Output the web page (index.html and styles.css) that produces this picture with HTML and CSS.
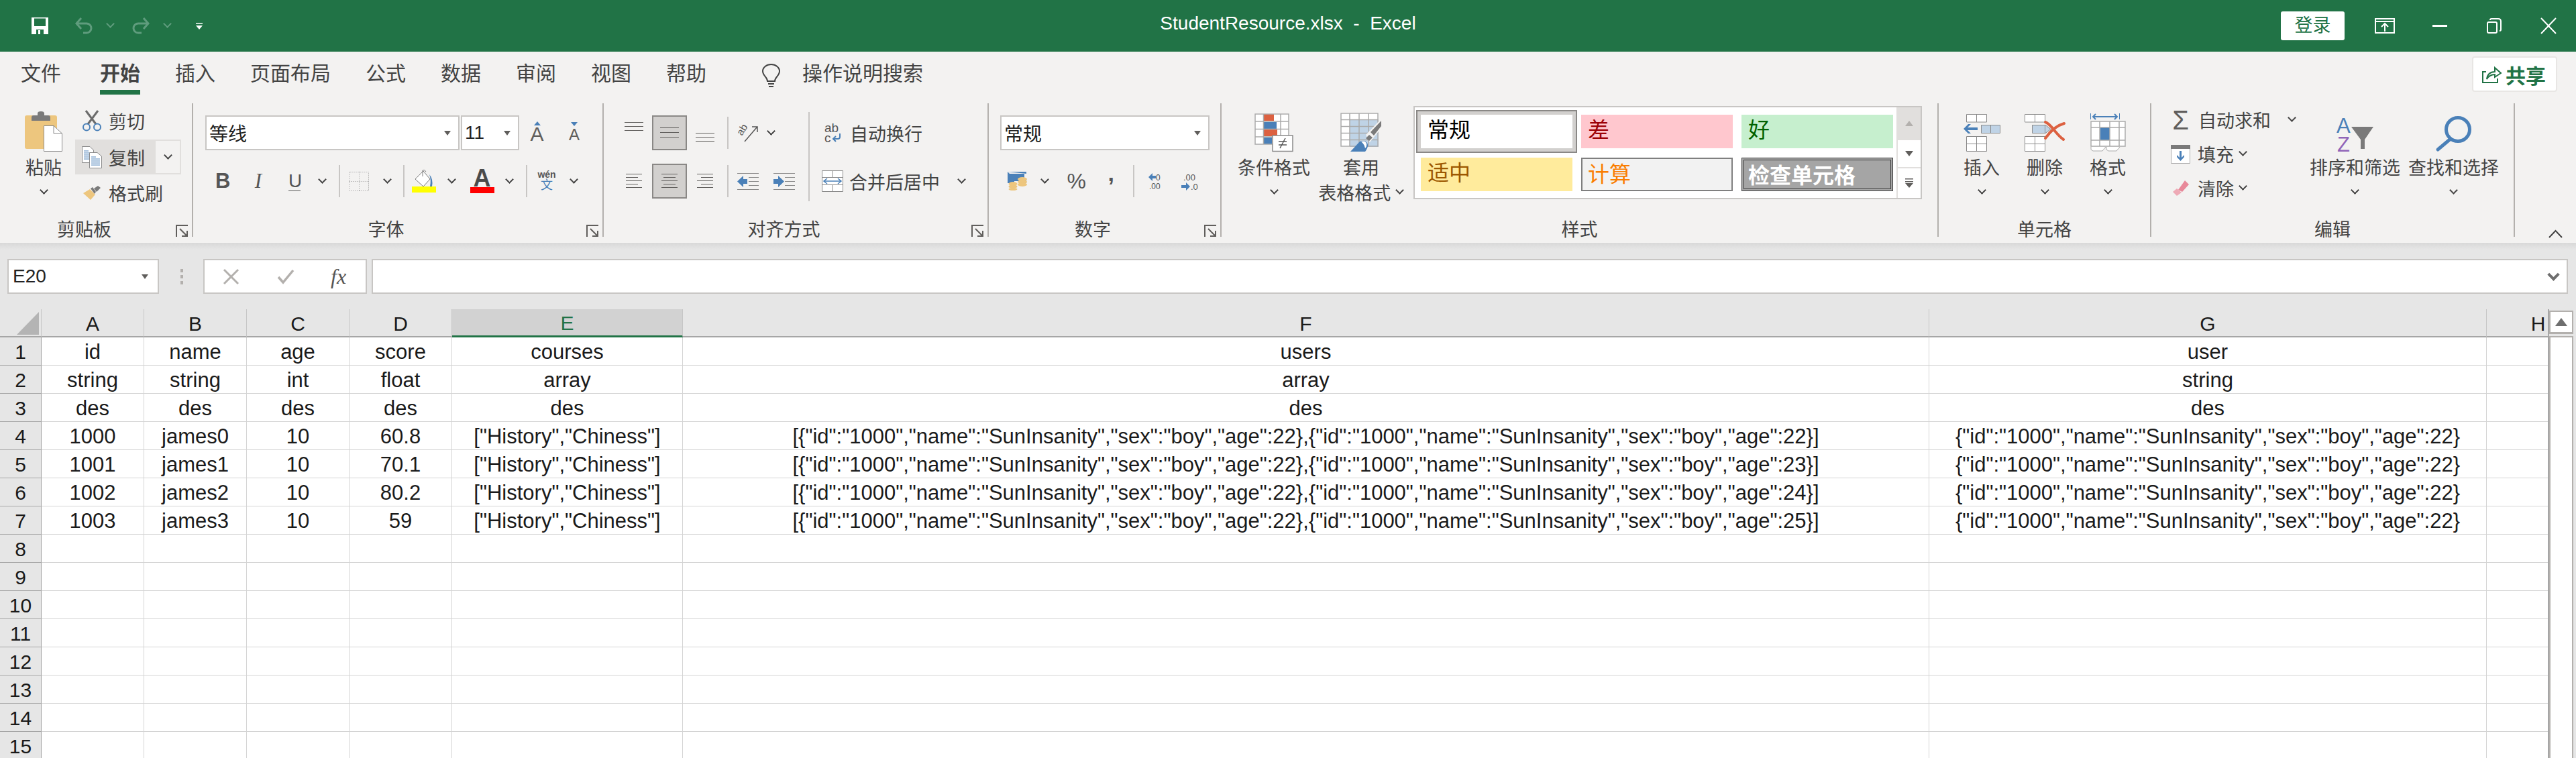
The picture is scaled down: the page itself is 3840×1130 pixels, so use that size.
FILE: index.html
```html
<!doctype html>
<html>
<head>
  <title>StudentResource.xlsx - Excel</title>
  <link rel="stylesheet" href="styles.css">
</head>
<body>
  <div id="titleBar">
    <div class="quick">
      <svg class="ml-18" width="25" height="25" viewBox="0 0 25 25"><path fill="#fff" d="M0 0H25V25H0Z"/><path fill="#217346" d="M4 1.5H21V13H4ZM7 18H18V25H7Z"/><path fill="#fff" d="M10 19H13V25H10Z"/></svg>
      <svg class="ml-40" width="26" height="27" viewBox="0 0 26 27"><path fill="none" stroke="#5f9c7d" stroke-width="3" d="M2 10H17A7 7 0 0 1 17 24H12M9 2L2 10L9 18"/></svg>
      <i class="chev chev-fade ml-22"></i>
      <svg class="ml-26" width="26" height="27" viewBox="0 0 26 27"><path fill="none" stroke="#5f9c7d" stroke-width="3" d="M24 10H9A7 7 0 0 0 9 24H14M17 2L24 10L17 18"/></svg>
      <i class="chev chev-fade ml-22"></i>
      <svg class="ml-37" width="10" height="10" viewBox="0 0 10 10"><path fill="#fff" d="M0 0H10V1.5H0ZM0 4H10L5 10Z"/></svg>
    </div>
    <div class="title">StudentResource.xlsx&nbsp; - &nbsp;Excel</div>
    <div class="win">
      <div class="login">登录</div>
      <svg class="ml-45" width="30" height="23" viewBox="0 0 30 23"><path fill="none" stroke="#fff" stroke-width="2" d="M1 1H29V22H1ZM1 5H29M15 20V9M10 13L15 8L20 13"/></svg>
      <svg class="ml-56" width="22" height="3" viewBox="0 0 22 3"><path fill="#fff" d="M0 0H22V3H0Z"/></svg>
      <svg class="ml-59" width="22" height="23" viewBox="0 0 22 23"><path fill="none" stroke="#fff" stroke-width="2" d="M5 3Q5 1 7 1H17Q21 1 21 5V17Q21 19 19 19M3 6H13Q15 6 15 8V20Q15 22 13 22H3Q1 22 1 20V8Q1 6 3 6Z"/></svg>
      <svg class="ml-58" width="24" height="23" viewBox="0 0 24 23"><path fill="none" stroke="#fff" stroke-width="2" d="M1 0L23 23M23 0L1 23"/></svg>
    </div>
  </div>

  <div id="tabBar">
    <div class="tab tab-file">文件</div>
    <div class="tab tab-on">开始</div>
    <div class="tab">插入</div>
    <div class="tab">页面布局</div>
    <div class="tab">公式</div>
    <div class="tab">数据</div>
    <div class="tab">审阅</div>
    <div class="tab">视图</div>
    <div class="tab">帮助</div>
    <svg class="bulb" width="27" height="36" viewBox="0 0 27 36"><path fill="none" stroke="#444" stroke-width="2" d="M8 26C8 20 1 18 1 11A12.500 10 0 0 1 26 11C26 18 19 20 19 26ZM9 30H18M10 34H17"/></svg>
    <div class="tab search">操作说明搜索</div>
    <div class="share">
      <svg width="29" height="26" viewBox="0 0 29 26"><path fill="none" stroke="#217346" stroke-width="2" d="M6 9H1V25H23V19"/><path fill="none" stroke="#217346" stroke-width="2" d="M7 20C8 12 12 9 19 9V3L28 11L19 17V13C14 13 10 15 7 20Z"/></svg>
      <span>共享</span>
    </div>
  </div>

  <div id="ribbon">
    <!-- clipboard -->
    <div class="group g-clip">
      <div class="group-body">
        <div class="big-btn paste-btn">
          <div class="big-icon">
            <svg width="56" height="60" viewBox="0 0 56 60"><rect y="6" width="48" height="50" rx="3" fill="#edc67e"/><path fill="#7a7a7a" d="M10 14V9Q10 6 13 6H19V3Q19 0 24 0Q29 0 29 3V6H35Q38 6 38 9V14Z"/><path fill="#fff" stroke="#8a8a8a" d="M28.500 21.500H43L55.500 33V59.500H28.500Z"/><path fill="none" stroke="#8a8a8a" d="M43 21.500V33H55.500"/></svg>
          </div>
          <div class="big-label">粘贴</div>
          <div class="big-chev"><i class="chev"></i></div>
        </div>
        <div class="clip-col">
          <div class="clip-row clip-cut">
            <div class="clip-ic"><svg width="30" height="32" viewBox="0 0 30 32"><path fill="none" stroke="#6b6b6b" stroke-width="3" d="M9 21L24 1M21 21L6 1"/><circle cx="7" cy="25.500" r="5" fill="none" stroke="#4a80b8" stroke-width="2"/><circle cx="23" cy="25.500" r="5" fill="none" stroke="#4a80b8" stroke-width="2"/></svg></div>
            <span>剪切</span>
          </div>
          <div class="clip-row clip-copy">
            <div class="clip-ic"><svg width="30" height="33" viewBox="0 0 30 33"><path fill="#fff" stroke="#8a8a8a" d="M.5 .5H12L17.500 6V24.500H.5Z"/><path fill="none" stroke="#4a80b8" d="M3 7H10M3 10H15M3 13H15M3 16H15M3 19H15"/><path fill="#fff" stroke="#8a8a8a" d="M11.500 9.500H23L29.500 15V32.500H11.500Z"/><path fill="none" stroke="#4a80b8" d="M14 16H21M14 19H27M14 22H27M14 25H27M14 28H27"/></svg></div>
            <span>复制</span>
            <div class="copy-drop"><i class="chev"></i></div>
          </div>
          <div class="clip-row">
            <div class="clip-ic"><svg width="26" height="21" viewBox="0 0 26 21"><path fill="#edc67e" d="M0 11L10 5L18 13L11 21Z"/><path fill="#7a7a7a" d="M11 4L14 2L19 9L17 12ZM16 4L22 0L26 3L20 9Z"/></svg></div>
            <span>格式刷</span>
          </div>
        </div>
      </div>
      <div class="group-foot">
        <div class="foot-label">剪贴板</div>
        <div class="launcher"><svg width="18" height="18" viewBox="0 0 18 18"><path fill="none" stroke="#605e5c" stroke-width="2" d="M1 18V1H18M6 6L17 17M17 9V17H9"/></svg></div>
      </div>
    </div>

    <!-- font -->
    <div class="group g-font">
      <div class="group-body two-rows">
        <div class="row">
          <div class="select font-name"><span>等线</span><i class="tri"></i></div>
          <div class="select font-size"><span>11</span><i class="tri"></i></div>
          <div class="grow-a ml-19">A<svg width="10" height="6" viewBox="0 0 10 6"><path fill="#4a80b8" d="M5 0L10 6H0Z"/></svg></div>
          <div class="shrink-a ml-42">A<svg width="10" height="6" viewBox="0 0 10 6"><path fill="#4a80b8" d="M5 6L10 0H0Z"/></svg></div>
        </div>
        <div class="row">
          <span class="fmt-b ml-15">B</span>
          <span class="fmt-i ml-37">I</span>
          <span class="fmt-u ml-37">U</span>
          <i class="chev ml-28"></i>
          <i class="vsep ml-18"></i>
          <svg class="ml-14" width="29" height="29" viewBox="0 0 29 29"><path fill="none" stroke="#8a8a8a" stroke-dasharray="1 2" d="M.5 .5H28.500V28.500H.5ZM14.500 0V29M0 14.500H29"/></svg>
          <i class="chev ml-23"></i>
          <i class="vsep ml-18"></i>
          <svg class="ml-11" width="36" height="34" viewBox="0 0 36 34"><path fill="#fff" stroke="#7a7a7a" d="M5 14L17 2L27 14L17 25Z"/><path fill="none" stroke="#7a7a7a" d="M16 10V1Q19 -1 21 3"/><path fill="#4a80b8" d="M26 7Q32 14 30 25H27Q29 15 26 7Z"/><path fill="#ff0" d="M0 25H36V34H0Z"/></svg>
          <i class="chev ml-19"></i>
          <div class="font-color ml-21"><span>A</span><i></i></div>
          <i class="chev ml-18"></i>
          <i class="vsep ml-19"></i>
          <div class="phonetic ml-16"><span>wén</span><b>文</b></div>
          <i class="chev ml-23"></i>
        </div>
      </div>
      <div class="group-foot">
        <div class="foot-label">字体</div>
        <div class="launcher"><svg width="18" height="18" viewBox="0 0 18 18"><path fill="none" stroke="#605e5c" stroke-width="2" d="M1 18V1H18M6 6L17 17M17 9V17H9"/></svg></div>
      </div>
    </div>

    <!-- alignment -->
    <div class="group g-align">
      <div class="group-body align-body">
        <div class="align-grid">
          <div class="al-cell"><svg width="28" height="52" viewBox="0 0 28 52"><path stroke="#605e5c" d="M0 10.500H28M0 16.500H28M0 22.500H28"/></svg></div>
          <div class="al-cell al-on"><svg width="28" height="48" viewBox="0 0 28 48"><path stroke="#605e5c" d="M0 16.500H28M0 23.500H28M0 30.500H28"/></svg></div>
          <div class="al-cell"><svg width="28" height="52" viewBox="0 0 28 52"><path stroke="#605e5c" d="M0 26.500H28M0 32.500H28M0 38.500H28"/></svg></div>
          <div class="al-cell"><svg width="24" height="52" viewBox="0 0 24 52"><path stroke="#605e5c" d="M0 15.500H24M0 20.500H18M0 25.500H24M0 30.500H18M0 35.500H24"/></svg></div>
          <div class="al-cell al-on"><svg width="24" height="48" viewBox="0 0 24 48"><path stroke="#605e5c" d="M0 13.500H24M3 18.500H21M0 23.500H24M3 28.500H21M0 33.500H24"/></svg></div>
          <div class="al-cell"><svg width="24" height="52" viewBox="0 0 24 52"><path stroke="#605e5c" d="M0 15.500H24M6 20.500H24M0 25.500H24M6 30.500H24M0 35.500H24"/></svg></div>
        </div>
        <div class="vsep-pair ml-6"><i class="vsep"></i><i class="vsep"></i></div>
        <div class="align-mid">
          <div class="row">
            <svg class="ml-15" width="29" height="25" viewBox="0 0 29 25"><text class="svg-txt" font-size="15" transform="translate(5 17) rotate(-58)" fill="#555">ab</text><path fill="none" stroke="#555" stroke-width="1.500" d="M9 25L27 4M20 3H28V11"/></svg>
            <i class="chev ml-15"></i>
          </div>
          <div class="row">
            <svg class="ml-13" width="32" height="25" viewBox="0 0 32 25"><path stroke="#8a8a8a" d="M0 .5H32M17 6.500H32M17 12.500H32M17 18.500H32M0 24.500H32"/><path fill="#4a80b8" d="M0 12.500L9 4V9H15V16H9V21Z"/></svg>
            <svg class="ml-22" width="32" height="25" viewBox="0 0 32 25"><path stroke="#8a8a8a" d="M0 .5H32M17 6.500H32M17 12.500H32M17 18.500H32M0 24.500H32"/><path fill="#4a80b8" d="M16 12.500L7 4V9H0V16H7V21Z"/></svg>
          </div>
        </div>
        <i class="vsep vsep-tall"></i>
        <div class="align-wrap">
          <div class="row">
            <svg class="ml-22" width="25" height="28" viewBox="0 0 25 28"><text class="svg-txt" x="0" y="13" font-size="19" fill="#555">ab</text><text class="svg-txt" x="0" y="28" font-size="19" fill="#555">c</text><path fill="none" stroke="#4a80b8" stroke-width="2" d="M23 15V20Q23 23 20 23H13M17 19L13 23L17 27"/></svg>
            <span class="ml-13">自动换行</span>
          </div>
          <div class="row">
            <svg class="ml-18" width="32" height="32" viewBox="0 0 32 32"><path fill="#fff" stroke="#8a8a8a" d="M.5 .5H31.500V31.500H.5ZM0 10.500H32M0 21.500H32M16 0V10M16 22V32"/><path fill="none" stroke="#4a80b8" stroke-width="1.500" d="M4 16H28M8 12L3 16L8 20M24 12L29 16L24 20"/></svg>
            <span class="ml-9">合并后居中</span>
            <i class="chev ml-28"></i>
          </div>
        </div>
      </div>
      <div class="group-foot">
        <div class="foot-label">对齐方式</div>
        <div class="launcher"><svg width="18" height="18" viewBox="0 0 18 18"><path fill="none" stroke="#605e5c" stroke-width="2" d="M1 18V1H18M6 6L17 17M17 9V17H9"/></svg></div>
      </div>
    </div>

    <!-- number -->
    <div class="group g-num">
      <div class="group-body two-rows">
        <div class="row">
          <div class="select num-fmt"><span>常规</span><i class="tri"></i></div>
        </div>
        <div class="row">
          <svg class="ml-11" width="29" height="28" viewBox="0 0 29 28"><path fill="#4a80b8" d="M0 0H28V17H20V14H3V3H25V10H28V3ZM0 0V17H10V14H3V3Z"/><ellipse cx="14" cy="8.500" rx="3.500" ry="5" fill="#4a80b8"/><g fill="#edc67e"><ellipse cx="22" cy="11" rx="7" ry="3"/><ellipse cx="22" cy="15" rx="7" ry="3"/><ellipse cx="22" cy="19" rx="7" ry="3"/><ellipse cx="8" cy="18" rx="6.500" ry="3"/><ellipse cx="8" cy="22" rx="6.500" ry="3"/><ellipse cx="8" cy="26" rx="6.500" ry="2"/></g></svg>
          <i class="chev ml-22"></i>
          <span class="pct ml-27">%</span>
          <span class="comma ml-34">,</span>
          <i class="vsep ml-28"></i>
          <svg class="ml-21" width="21" height="24" viewBox="0 0 21 24"><path fill="#4a80b8" d="M0 6L6 0V4H11V8H6V12Z"/><text class="svg-txt" x="11" y="11" font-size="12" fill="#555">0</text><text class="svg-txt" x="1" y="24" font-size="12" fill="#555">.00</text></svg>
          <svg class="ml-28" width="26" height="27" viewBox="0 0 26 27"><text class="svg-txt" x="3" y="12" font-size="13" fill="#555">.00</text><path fill="#4a80b8" d="M13 21L7 15V19H0V23H7V27Z"/><text class="svg-txt" x="14" y="26" font-size="13" fill="#555">.0</text></svg>
        </div>
      </div>
      <div class="group-foot">
        <div class="foot-label">数字</div>
        <div class="launcher"><svg width="18" height="18" viewBox="0 0 18 18"><path fill="none" stroke="#605e5c" stroke-width="2" d="M1 18V1H18M6 6L17 17M17 9V17H9"/></svg></div>
      </div>
    </div>

    <!-- styles -->
    <div class="group g-style">
      <div class="group-body">
        <div class="big-btn cond-btn">
          <div class="big-icon">
            <svg width="58" height="57" viewBox="0 0 58 57"><path fill="#fff" d="M0 0H51V46H0Z"/><path fill="#dc6141" d="M14 1H29V11H14ZM14 24H34V34H14Z"/><path fill="#4a80b8" d="M14 13H33V23H14ZM14 36H26V46H14Z"/><path fill="none" stroke="#aaa" stroke-width="1.500" d="M1 1H51V46H1ZM13.500 1V46M39 1V46M1 12H51M1 23.500H51M1 35H51"/><path fill="#fff" stroke="#8a8a8a" stroke-width="1.500" d="M27 33H57V56.500H27Z"/><path fill="none" stroke="#555" stroke-width="1.500" d="M36 42H48M36 47H48M46 37L38 52"/></svg>
          </div>
          <div class="big-label">条件格式</div>
          <div class="big-chev"><i class="chev"></i></div>
        </div>
        <div class="big-btn table-btn">
          <div class="big-icon">
            <svg width="62" height="58" viewBox="0 0 62 58"><path fill="#fff" d="M0 0H57V51H0Z"/><path fill="#bfd3e6" d="M14 10H57V51H14Z"/><path fill="none" stroke="#aaa" stroke-width="1.500" d="M1 1H56V50H1ZM14 1V50M28 1V50M42 1V50M1 10.500H56M1 20.500H56M1 30.500H56M1 40.500H56"/><path fill="#f3f2f1" d="M38 33L62 8V22L44 44Z"/><path fill="#7a7a7a" d="M45 29L61 12V20L50 34ZM38 38L43 33L48 37L43 42Z"/><path fill="#4a80b8" d="M15 58L29 43Q36 40 40 45Q43 50 37 58Z"/><path fill="#fff" d="M31 43Q37 41 39 46Q40 50 37 53Q36 47 31 43Z"/></svg>
          </div>
          <div class="big-label">套用</div>
          <div class="big-second">表格格式<i class="chev ml-9"></i></div>
        </div>
        <div class="gallery">
          <div class="cell-styles">
            <div class="cs cs-normal">常规</div>
            <div class="cs cs-bad">差</div>
            <div class="cs cs-good">好</div>
            <div class="cs cs-neutral">适中</div>
            <div class="cs cs-calc">计算</div>
            <div class="cs cs-check">检查单元格</div>
          </div>
          <div class="gal-scroll">
            <div class="gs gs-up"><svg width="12" height="8" viewBox="0 0 12 8"><path fill="#b3b0ad" d="M6 0L12 8H0Z"/></svg></div>
            <div class="gs gs-down"><svg width="12" height="8" viewBox="0 0 12 8"><path fill="#605e5c" d="M6 8L12 0H0Z"/></svg></div>
            <div class="gs gs-more"><svg width="12" height="14" viewBox="0 0 12 14"><path fill="#605e5c" d="M0 0H12V1.500H0ZM0 4H12V5.500H0ZM6 14L12 7H0Z"/></svg></div>
          </div>
        </div>
      </div>
      <div class="group-foot">
        <div class="foot-label">样式</div>
      </div>
    </div>

    <!-- cells -->
    <div class="group g-cells">
      <div class="group-body">
        <div class="big-btn cell-btn">
          <div class="big-icon">
            <svg width="55" height="56" viewBox="0 0 55 56"><path fill="#fff" stroke="#8a8a8a" d="M4.500 .5H34.500V12H4.500ZM19.500 0V12M4.500 33.500H34.500V55.500H4.500ZM19.500 33V56M4 44.500H35"/><path fill="#bfd3e6" stroke="#8a8a8a" d="M26.500 16.500H54.500V28.500H26.500ZM40.500 16V29"/><path fill="#4a80b8" d="M0 22L7 15H11L6 20H21V24H6L11 29H7Z"/></svg>
          </div>
          <div class="big-label">插入</div>
          <div class="big-chev"><i class="chev"></i></div>
        </div>
        <div class="big-btn cell-btn ml-40">
          <div class="big-icon">
            <svg width="60" height="56" viewBox="0 0 60 56"><path fill="#fff" stroke="#8a8a8a" d="M.5 .5H30.500V12H.5ZM15.500 0V12M.5 33.500H30.500V55.500H.5ZM15.500 33V56M0 44.500H31"/><path fill="#bfd3e6" stroke="#8a8a8a" d="M11.500 16.500H30.500V28.500H11.500ZM30.500 16L39 22.500L30.500 29"/><path fill="none" stroke="#dc6141" stroke-width="4" stroke-linecap="round" d="M31 12C40 15 46 30 58 38M59 14C48 17 38 26 31 36"/></svg>
          </div>
          <div class="big-label">删除</div>
          <div class="big-chev"><i class="chev"></i></div>
        </div>
        <div class="big-btn cell-btn ml-40">
          <div class="big-icon">
            <svg width="53" height="57" viewBox="0 0 53 57"><path fill="none" stroke="#4a80b8" d="M.5 0V9M43.500 0V9"/><path fill="none" stroke="#4a80b8" stroke-width="2" d="M4 5H40M8 1L4 5L8 9M36 1L40 5L36 9"/><path fill="#fff" d="M0 12H53V49H0Z"/><path fill="#4a80b8" d="M15 21H29V40H15Z"/><path fill="none" stroke="#aaa" stroke-width="1.500" d="M1 12H52V49H1ZM14 12V49M29 12V49M43 12V49M1 21H52M1 40H52"/><path fill="#fff" stroke="#aaa" d="M1 50V54L4 56H18L23 50M24 50V54L27 56H39L44 50"/></svg>
          </div>
          <div class="big-label">格式</div>
          <div class="big-chev"><i class="chev"></i></div>
        </div>
      </div>
      <div class="group-foot">
        <div class="foot-label">单元格</div>
      </div>
    </div>

    <!-- editing -->
    <div class="group g-edit">
      <div class="group-body">
        <div class="edit-col">
          <div class="edit-row">
            <span class="sigma">Σ</span>
            <span class="ml-12">自动求和</span>
            <i class="chev ml-27"></i>
          </div>
          <div class="edit-row">
            <svg width="29" height="28" viewBox="0 0 29 28"><path fill="#fff" stroke="#aaa" d="M.5 .5H28.500V27.500H.5Z"/><path fill="#7a7a7a" d="M0 0H29V6H0Z"/><path fill="#4a80b8" d="M13 9H16V19L20 15V18L14.500 24L9 18V15L13 19Z"/></svg>
            <span class="ml-11">填充</span>
            <i class="chev ml-9"></i>
          </div>
          <div class="edit-row">
            <svg class="ml-3" width="24" height="23" viewBox="0 0 24 23"><path fill="#e8899a" d="M8 14L18 0L24 6L14 17Z"/><path fill="#eeaab6" d="M0 17L6 12L13 18L6 23Z"/></svg>
            <span class="ml-13">清除</span>
            <i class="chev ml-9"></i>
          </div>
        </div>
        <div class="big-btn find-btn">
          <div class="big-icon">
            <svg width="55" height="51" viewBox="0 0 55 51"><text class="svg-txt" x="0" y="23" font-size="31" fill="#4a80b8">A</text><text class="svg-txt" x="1" y="51" font-size="31" fill="#9064b8">Z</text><path fill="#7a7a7a" d="M22 14H55L42 33V47L36 47V33Z"/></svg>
          </div>
          <div class="big-label">排序和筛选</div>
          <div class="big-chev"><i class="chev"></i></div>
        </div>
        <div class="big-btn find-btn ml-12">
          <div class="big-icon">
            <svg width="53" height="53" viewBox="0 0 53 53"><circle cx="33" cy="20" r="17.500" fill="#f3f2f1" stroke="#4a80b8" stroke-width="5"/><path stroke="#4a80b8" stroke-width="5" stroke-linecap="round" d="M22 34L3 50"/></svg>
          </div>
          <div class="big-label">查找和选择</div>
          <div class="big-chev"><i class="chev"></i></div>
        </div>
      </div>
      <div class="group-foot">
        <div class="foot-label">编辑</div>
      </div>
    </div>

    <svg class="collapse" width="21" height="11" viewBox="0 0 21 11"><path fill="none" stroke="#444" stroke-width="2" d="M1 11L10.500 1L20 11"/></svg>
  </div>

  <div id="formulaBar">
    <div class="name-box"><span>E20</span><i class="tri"></i></div>
    <div class="dots"><i></i><i></i><i></i></div>
    <div class="fx-box">
      <svg width="23" height="21" viewBox="0 0 23 21"><path fill="none" stroke="#b3b0ad" stroke-width="3" d="M1 0L22 21M22 0L1 21"/></svg>
      <svg class="ml-57" width="26" height="21" viewBox="0 0 26 21"><path fill="none" stroke="#b3b0ad" stroke-width="3.500" d="M2 11L9 19L24 1"/></svg>
      <span class="fx ml-54">fx</span>
    </div>
    <div class="formula-input"><i class="chev chev-big"></i></div>
  </div>

  <div id="sheet">
    <div class="grid-wrap">
      <table class="grid">
        <colgroup>
          <col class="c-head"><col class="c-short"><col class="c-short"><col class="c-short"><col class="c-short"><col class="c-e"><col class="c-f"><col class="c-g"><col class="c-h">
        </colgroup>
        <thead>
          <tr>
            <th class="corner"><svg width="33" height="34" viewBox="0 0 33 34"><path fill="#b4b4b4" d="M33 0V34H0Z"/></svg></th>
            <th>A</th><th>B</th><th>C</th><th>D</th><th class="col-on">E</th><th>F</th><th>G</th><th>H</th>
          </tr>
        </thead>
        <tbody>
          <tr><th>1</th><td>id</td><td>name</td><td>age</td><td>score</td><td>courses</td><td>users</td><td>user</td><td></td></tr>
          <tr><th>2</th><td>string</td><td>string</td><td>int</td><td>float</td><td>array</td><td>array</td><td>string</td><td></td></tr>
          <tr><th>3</th><td>des</td><td>des</td><td>des</td><td>des</td><td>des</td><td>des</td><td>des</td><td></td></tr>
          <tr><th>4</th><td>1000</td><td>james0</td><td>10</td><td>60.8</td><td>["History","Chiness"]</td><td>[{"id":"1000","name":"SunInsanity","sex":"boy","age":22},{"id":"1000","name":"SunInsanity","sex":"boy","age":22}]</td><td>{"id":"1000","name":"SunInsanity","sex":"boy","age":22}</td><td></td></tr>
          <tr><th>5</th><td>1001</td><td>james1</td><td>10</td><td>70.1</td><td>["History","Chiness"]</td><td>[{"id":"1000","name":"SunInsanity","sex":"boy","age":22},{"id":"1000","name":"SunInsanity","sex":"boy","age":23}]</td><td>{"id":"1000","name":"SunInsanity","sex":"boy","age":22}</td><td></td></tr>
          <tr><th>6</th><td>1002</td><td>james2</td><td>10</td><td>80.2</td><td>["History","Chiness"]</td><td>[{"id":"1000","name":"SunInsanity","sex":"boy","age":22},{"id":"1000","name":"SunInsanity","sex":"boy","age":24}]</td><td>{"id":"1000","name":"SunInsanity","sex":"boy","age":22}</td><td></td></tr>
          <tr><th>7</th><td>1003</td><td>james3</td><td>10</td><td>59</td><td>["History","Chiness"]</td><td>[{"id":"1000","name":"SunInsanity","sex":"boy","age":22},{"id":"1000","name":"SunInsanity","sex":"boy","age":25}]</td><td>{"id":"1000","name":"SunInsanity","sex":"boy","age":22}</td><td></td></tr>
          <tr><th>8</th><td></td><td></td><td></td><td></td><td></td><td></td><td></td><td></td></tr>
          <tr><th>9</th><td></td><td></td><td></td><td></td><td></td><td></td><td></td><td></td></tr>
          <tr><th>10</th><td></td><td></td><td></td><td></td><td></td><td></td><td></td><td></td></tr>
          <tr><th>11</th><td></td><td></td><td></td><td></td><td></td><td></td><td></td><td></td></tr>
          <tr><th>12</th><td></td><td></td><td></td><td></td><td></td><td></td><td></td><td></td></tr>
          <tr><th>13</th><td></td><td></td><td></td><td></td><td></td><td></td><td></td><td></td></tr>
          <tr><th>14</th><td></td><td></td><td></td><td></td><td></td><td></td><td></td><td></td></tr>
          <tr><th>15</th><td></td><td></td><td></td><td></td><td></td><td></td><td></td><td></td></tr>
        </tbody>
      </table>
    </div>
    <div class="v-scroll">
      <div class="vs-up"><svg width="18" height="12" viewBox="0 0 18 12"><path fill="#6e6e6e" d="M9 0L18 12H0Z"/></svg></div>
      <div class="vs-track"></div>
    </div>
  </div>
</body>
</html>
```

FILE: styles.css
```css
html, body {
  margin: 0;
  height: 1130px;
  overflow: hidden;
}

body {
  display: flex;
  flex-direction: column;
  background: #f3f2f1;
  color: #444;
  font-family: "Liberation Sans", "Noto Sans CJK SC", sans-serif;
  font-size: 27px;
}

svg {
  display: block;
  flex: none;
  overflow: visible;
}

.chev {
  display: block;
  flex: none;
  box-sizing: border-box;
  width: 9px;
  height: 9px;
  margin: -6px 1.5px 0;
  border: solid #444;
  border-width: 0 2px 2px 0;
  transform: rotate(45deg);
}

.chev-fade {
  border-color: #5f9c7d;
}

.chev-big {
  width: 13px;
  height: 13px;
  border-width: 0 4px 4px 0;
  border-color: #6e6e6e;
}

.ml-3 { margin-left: 3px; }
.ml-6 { margin-left: 6px; }
.ml-9 { margin-left: 9px; }
.ml-11 { margin-left: 11px; }
.ml-12 { margin-left: 12px; }
.ml-13 { margin-left: 13px; }
.ml-14 { margin-left: 14px; }
.ml-15 { margin-left: 15px; }
.ml-16 { margin-left: 16px; }
.ml-18 { margin-left: 18px; }
.ml-19 { margin-left: 19px; }
.ml-21 { margin-left: 21px; }
.ml-22 { margin-left: 22px; }
.ml-23 { margin-left: 23px; }
.ml-26 { margin-left: 26px; }
.ml-27 { margin-left: 27px; }
.ml-28 { margin-left: 28px; }
.ml-34 { margin-left: 34px; }
.ml-37 { margin-left: 37px; }
.ml-40 { margin-left: 40px; }
.ml-42 { margin-left: 42px; }
.ml-45 { margin-left: 45px; }
.ml-54 { margin-left: 54px; }
.ml-56 { margin-left: 56px; }
.ml-57 { margin-left: 57px; }
.ml-58 { margin-left: 58px; }
.ml-59 { margin-left: 59px; }

.tri {
  display: block;
  flex: none;
  width: 0;
  height: 0;
  border-style: solid;
  border-width: 7px 5px 0;
  border-color: #605e5c transparent transparent;
}

.svg-txt {
  font-family: "Liberation Sans", sans-serif;
}

/* title bar */
#titleBar {
  display: flex;
  align-items: center;
  flex: none;
  height: 77px;
  background: #217346;
  color: #fff;
}

.quick, .win {
  display: flex;
  align-items: center;
  flex: 1;
}

.quick {
  padding-left: 29px;
}

.win {
  justify-content: flex-end;
  padding-right: 29px;
}

.title {
  font-size: 28px;
  padding-bottom: 8px;
}

.login {
  width: 95px;
  height: 43px;
  line-height: 43px;
  border-radius: 3px;
  background: #fff;
  color: #217346;
  text-align: center;
}

/* tabs */
#tabBar {
  display: flex;
  align-items: flex-start;
  flex: none;
  height: 77px;
  padding-left: 31px;
  padding-right: 28px;
}

.tab {
  flex: none;
  margin-right: 52px;
  padding: 13px 0 11px;
  line-height: 40px;
  font-size: 30px;
}

.tab-file {
  margin-right: 58px;
}

.tab-on {
  padding-bottom: 4px;
  border-bottom: 7px solid #217346;
  font-weight: bold;
}

.bulb {
  margin: 18px 0 0 31px;
}

.search {
  margin-left: 33px;
}

.share {
  display: flex;
  align-items: center;
  box-sizing: border-box;
  width: 127px;
  height: 53px;
  margin: 7px 0 0 auto;
  padding-left: 13px;
  background: #fff;
  border: 2px solid #e8e6e4;
  border-radius: 4px;
  color: #217346;
  font-size: 30px;
  font-weight: bold;
}

.share span {
  margin-left: 6px;
}

/* ribbon */
#ribbon {
  display: flex;
  flex: none;
  height: 208px;
}

.group {
  display: flex;
  flex-direction: column;
  flex: none;
  box-sizing: border-box;
  height: 199px;
  border-right: 2px solid #b3b0ad;
}

.g-clip { width: 288px; }
.g-font { width: 612px; }
.g-align { width: 574px; }
.g-num { width: 347px; }
.g-style { width: 1069px; }
.g-cells { width: 317px; }
.g-edit { width: 542px; }

.group-body {
  display: flex;
  flex: 1;
  min-height: 0;
}

.group-foot {
  display: flex;
  align-items: flex-end;
  flex: none;
  height: 30px;
}

.foot-label {
  flex: 1;
  height: 30px;
  line-height: 30px;
  text-align: center;
  transform: translateY(5px);
}

.launcher {
  display: flex;
  justify-content: flex-end;
  box-sizing: border-box;
  width: 35px;
  padding-right: 6px;
}

.collapse {
  margin: 189px 0 0 50px;
}

.big-btn {
  display: flex;
  flex-direction: column;
  align-items: center;
  flex: none;
}

.big-icon {
  display: flex;
  align-items: flex-end;
  height: 72px;
}

.big-label {
  margin-top: 8px;
  line-height: 35px;
  white-space: nowrap;
}

.big-chev, .big-second {
  display: flex;
  align-items: center;
  justify-content: center;
  height: 35px;
  white-space: nowrap;
}

.row {
  display: flex;
  align-items: center;
  height: 52px;
}

.two-rows {
  flex-direction: column;
  gap: 20px;
  padding: 18px 0 0 18px;
}

.g-num .two-rows {
  padding-left: 17px;
}

/* clipboard */
.paste-btn {
  width: 60px;
  margin-left: 35px;
}

.clip-col {
  display: flex;
  flex-direction: column;
  gap: 1px;
  width: 158px;
  margin-left: 17px;
}

.clip-row {
  display: flex;
  align-items: center;
  flex: none;
  height: 52px;
}

.clip-cut {
  margin-bottom: 1px;
}

.clip-ic {
  display: flex;
  justify-content: center;
  width: 50px;
}

.clip-copy {
  background: #e1dfdd;
}

.copy-drop {
  display: flex;
  align-items: center;
  justify-content: center;
  width: 36px;
  height: 48px;
  margin: 0 2px 0 auto;
  background: #f3f2f1;
}

/* font */
.select {
  display: flex;
  align-items: center;
  justify-content: space-between;
  box-sizing: border-box;
  height: 52px;
  padding: 0 11px 0 4px;
  background: #fff;
  border: 2px solid #c8c6c4;
  color: #222;
  font-size: 28px;
}

.font-name { width: 379px; }
.font-size { width: 87px; margin-left: 2px; }
.num-fmt { width: 312px; }

.grow-a, .shrink-a {
  display: flex;
  flex-direction: column-reverse;
  align-items: center;
  color: #605e5c;
  line-height: 26px;
}

.grow-a {
  width: 15px;
  margin-top: -2px;
  font-size: 30px;
}

.shrink-a {
  width: 12px;
  font-size: 24px;
}

.fmt-b, .fmt-i, .fmt-u {
  flex: none;
  color: #555;
  font-size: 31px;
  text-align: center;
}

.fmt-b { width: 19px; font-weight: bold; }
.fmt-i { width: 16px; font-style: italic; font-family: "Liberation Serif", serif; }
.fmt-u { width: 18px; font-size: 28px; border-bottom: 1px solid #555; line-height: 28px; }

.vsep {
  display: block;
  flex: none;
  width: 2px;
  height: 48px;
  background: #c8c6c4;
}

.vsep-tall {
  height: 133px;
  margin-top: -5px;
}

.font-color {
  display: flex;
  flex-direction: column;
  align-items: center;
  width: 36px;
}

.font-color span {
  height: 26px;
  line-height: 26px;
  color: #4a4a4a;
  font-size: 36px;
  font-weight: bold;
}

.font-color i {
  display: block;
  width: 36px;
  height: 9px;
  background: #f00;
}

.phonetic {
  display: flex;
  flex-direction: column;
  align-items: center;
  width: 26px;
}

.phonetic span {
  color: #555;
  font-size: 14px;
  font-weight: bold;
  line-height: 12px;
}

.phonetic b {
  color: #4a80b8;
  font-size: 18px;
  font-weight: normal;
  line-height: 20px;
}

/* alignment */
.align-body {
  padding: 18px 0 0 17px;
}

.align-grid {
  display: grid;
  grid-template-columns: 55px 52px 54px;
  grid-template-rows: 52px 52px;
  row-gap: 20px;
}

.al-cell {
  display: flex;
  justify-content: center;
}

.al-on {
  box-sizing: border-box;
  background: #d2d0ce;
  border: 2px solid #8a8886;
}

.vsep-pair {
  display: grid;
  grid-template-rows: 52px 52px;
  row-gap: 20px;
  align-items: center;
}

.align-mid {
  display: flex;
  flex-direction: column;
  gap: 20px;
  width: 119px;
}

.align-wrap {
  display: flex;
  flex-direction: column;
  gap: 20px;
}

/* number */
.pct {
  width: 27px;
  color: #555;
  font-size: 32px;
}

.comma {
  width: 9px;
  margin-top: -24px;
  color: #555;
  font-size: 34px;
  font-weight: bold;
  line-height: 30px;
}

/* styles */
.cond-btn {
  width: 108px;
  margin-left: 24px;
}

.table-btn {
  width: 132px;
  margin-left: 10px;
}

.gallery {
  display: flex;
  box-sizing: border-box;
  width: 758px;
  height: 139px;
  margin: 4px 0 0 12px;
  background: #fff;
  border: 2px solid #c8c6c4;
}

.cell-styles {
  display: grid;
  grid-template-columns: repeat(3, 226px);
  grid-template-rows: 50px 50px;
  column-gap: 13px;
  row-gap: 14px;
  flex: 1;
  padding: 11px 0 0 9px;
}

.cs {
  padding-left: 10px;
  color: #000;
  font-size: 32px;
  line-height: 46px;
}

.cs-normal {
  background: #fff;
  box-shadow: 0 0 0 5px #d2d0ce, 0 0 0 7px #8a8886;
}

.cs-bad { background: #ffc7ce; color: #9c0006; }
.cs-good { background: #c6efce; color: #006100; }
.cs-neutral { background: #ffeb9c; color: #9c5700; }

.cs-calc {
  box-sizing: border-box;
  padding-left: 8px;
  background: #f2f2f2;
  border: 2px solid #7f7f7f;
  color: #fa7d00;
}

.cs-check {
  box-sizing: border-box;
  padding-left: 6px;
  background: #a5a5a5;
  border: 4px double #3f3f3f;
  color: #fff;
  font-weight: bold;
}

.gal-scroll {
  display: flex;
  flex-direction: column;
  width: 34px;
  border-left: 2px solid #e1dfdd;
}

.gs {
  display: flex;
  align-items: center;
  justify-content: center;
  box-sizing: border-box;
  border-top: 2px solid #e1dfdd;
}

.gs-up {
  height: 47px;
  background: #e1dfdd;
  border-top: 0;
}

.gs-down {
  height: 42px;
}

.gs-more {
  flex: 1;
}

/* cells */
.g-cells .group-body {
  padding-left: 37px;
}

.cell-btn {
  width: 54px;
}

/* editing */
.g-edit .group-body {
  padding-left: 29px;
}

.edit-col {
  display: flex;
  flex-direction: column;
  width: 207px;
  margin-top: -1px;
}

.edit-row {
  display: flex;
  align-items: center;
  flex: none;
  height: 51px;
}

.sigma {
  width: 29px;
  color: #605e5c;
  font-size: 40px;
  line-height: 40px;
  text-align: center;
}

.find-btn {
  width: 135px;
}

/* formula bar */
#formulaBar {
  display: flex;
  flex: none;
  box-sizing: border-box;
  height: 99px;
  padding: 24px 12px 23px 11px;
  background: linear-gradient(#d8d8d8, #e6e6e6 10px);
}

.name-box {
  display: flex;
  align-items: center;
  justify-content: space-between;
  box-sizing: border-box;
  width: 226px;
  padding: 0 14px 0 6px;
  background: #fff;
  border: 2px solid #c8c6c4;
  color: #222;
  font-size: 28px;
}

.dots {
  display: flex;
  flex-direction: column;
  justify-content: center;
  gap: 4px;
  margin-left: 32px;
}

.dots i {
  display: block;
  width: 4px;
  height: 5px;
  background: #b3b0ad;
}

.fx-box {
  display: flex;
  align-items: center;
  box-sizing: border-box;
  width: 244px;
  margin-left: 30px;
  padding-left: 28px;
  background: #fff;
  border: 2px solid #c8c6c4;
}

.fx {
  color: #555;
  font-family: "Liberation Serif", serif;
  font-size: 32px;
  font-style: italic;
}

.formula-input {
  display: flex;
  align-items: center;
  justify-content: flex-end;
  flex: 1;
  margin-left: 7px;
  padding-right: 12px;
  background: #fff;
  border: 2px solid #c8c6c4;
}

/* sheet */
#sheet {
  display: flex;
  flex: 1;
  min-height: 0;
  background: #e6e6e6;
}

.grid-wrap {
  flex: none;
  box-sizing: border-box;
  width: 3800px;
  overflow: hidden;
  border-right: 2px solid #a6a6a6;
}

.grid {
  table-layout: fixed;
  width: 3510px;
  border-collapse: separate;
  border-spacing: 0;
  font-size: 31px;
  color: #1a1a1a;
}

.c-head { width: 62px; }
.c-short { width: 153px; }
.c-e { width: 344px; }
.c-f { width: 1858px; }
.c-g { width: 831px; }
.c-h { width: 154px; }

.grid th, .grid td {
  box-sizing: border-box;
  height: 42px;
  padding: 3px 0 0;
  text-align: center;
  vertical-align: middle;
  font-weight: normal;
  white-space: nowrap;
  line-height: 36px;
}

.grid td {
  background: #fff;
  border-right: 1px solid #d4d4d4;
  border-bottom: 1px solid #d4d4d4;
}

.grid th {
  background: #e6e6e6;
  border-right: 1px solid #c6c6c6;
  border-bottom: 1px solid #a6a6a6;
  font-size: 30px;
}

.grid tbody th {
  border-right: 1px solid #a6a6a6;
  border-bottom: 1px solid #a6a6a6;
}

.grid thead th {
  border-bottom: 2px solid #a6a6a6;
}

.grid .corner {
  padding: 0 0 0 25px;
  vertical-align: top;
}

.grid .corner svg {
  margin-top: 4px;
}

.grid .col-on {
  background: #d2d2d2;
  border-bottom: 3px solid #217346;
  color: #217346;
}

.v-scroll {
  display: flex;
  flex-direction: column;
  flex: none;
  box-sizing: border-box;
  width: 36px;
  padding-top: 2px;
}

.vs-up {
  display: flex;
  align-items: center;
  justify-content: center;
  flex: none;
  box-sizing: border-box;
  height: 35px;
  background: #fff;
  border: 2px solid #b3b0ad;
  border-bottom-width: 3px;
}

.vs-track {
  flex: 1;
  margin-top: 3px;
  background: #fff;
  border: solid #b3b0ad;
  border-width: 2px 2px 0;
}
```
